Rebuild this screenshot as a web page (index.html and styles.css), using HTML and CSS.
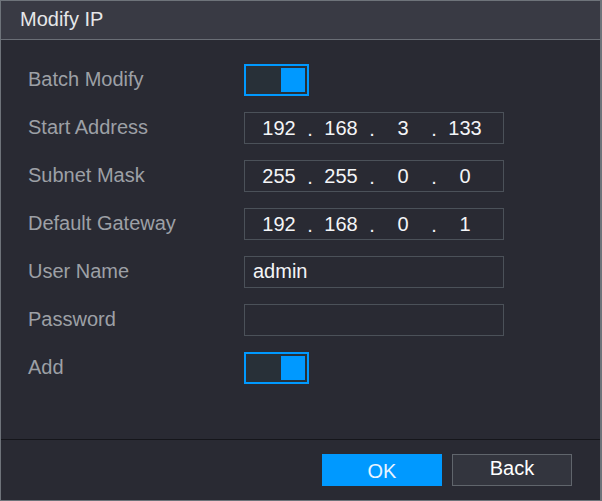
FILE: index.html
```html
<!DOCTYPE html>
<html>
<head>
<meta charset="utf-8">
<link rel="stylesheet" href="styles.css">
</head>
<body>
<div class="dialog">
  <div class="titlebar">Modify IP</div>
  <div class="content">
    <div class="row">
      <div class="label">Batch Modify</div>
      <div class="toggle"><span class="knob"></span></div>
    </div>
    <div class="row">
      <div class="label">Start Address</div>
      <div class="field ip">
        <span class="oct">192</span><span class="dot">.</span><span class="oct">168</span><span class="dot">.</span><span class="oct">3</span><span class="dot">.</span><span class="oct">133</span>
      </div>
    </div>
    <div class="row">
      <div class="label">Subnet Mask</div>
      <div class="field ip">
        <span class="oct">255</span><span class="dot">.</span><span class="oct">255</span><span class="dot">.</span><span class="oct">0</span><span class="dot">.</span><span class="oct">0</span>
      </div>
    </div>
    <div class="row">
      <div class="label">Default Gateway</div>
      <div class="field ip">
        <span class="oct">192</span><span class="dot">.</span><span class="oct">168</span><span class="dot">.</span><span class="oct">0</span><span class="dot">.</span><span class="oct">1</span>
      </div>
    </div>
    <div class="row">
      <div class="label">User Name</div>
      <div class="field text">admin</div>
    </div>
    <div class="row">
      <div class="label">Password</div>
      <div class="field text"></div>
    </div>
    <div class="row">
      <div class="label">Add</div>
      <div class="toggle"><span class="knob"></span></div>
    </div>
  </div>
  <div class="footer">
    <button class="btn btn-ok">OK</button>
    <button class="btn btn-back">Back</button>
  </div>
</div>
</body>
</html>
```

FILE: styles.css
```css
html, body {
  margin: 0;
  padding: 0;
  background: #292a33;
}
body {
  font-family: "Liberation Sans", Arial, sans-serif;
}
.dialog {
  width: 602px;
  height: 501px;
  box-sizing: border-box;
  border: 1px solid #6e737a;
  border-right-width: 2px;
  background: #292a33;
  display: flex;
  flex-direction: column;
}
.titlebar {
  height: 38px;
  border-bottom: 1px solid #6a6e76;
  background: #393a44;
  color: #e6e7e9;
  font-size: 20px;
  line-height: 36px;
  padding-left: 19px;
}
.content {
  height: 399px;
  box-sizing: border-box;
  padding: 24px 0 0 27px;
  display: flex;
  flex-direction: column;
  gap: 16px;
}
.row {
  display: flex;
  align-items: center;
  height: 32px;
}
.label {
  width: 216px;
  color: #9da0a6;
  font-size: 20px;
  padding-bottom: 2px;
}
.toggle {
  width: 65px;
  height: 32px;
  box-sizing: border-box;
  border: 2px solid #0099ff;
  background: #283038;
  padding: 2px;
  display: flex;
  justify-content: flex-end;
}
.knob {
  width: 24px;
  height: 24px;
  background: #0099ff;
}
.field {
  width: 260px;
  height: 32px;
  box-sizing: border-box;
  border: 1px solid #4b5159;
  color: #f4f5f7;
  font-size: 20px;
  display: flex;
  align-items: center;
}
.field.text {
  padding-left: 8px;
  padding-bottom: 1px;
}
.ip {
  padding-left: 12px;
}
.oct {
  width: 44px;
  text-align: center;
}
.dot {
  width: 18px;
  text-align: center;
  position: relative;
  top: 1px;
}
.footer {
  flex: 1;
  border-top: 1px solid #15161b;
  display: flex;
  justify-content: flex-end;
  align-items: flex-start;
  padding: 14px 28px 0 0;
  gap: 10px;
}
.btn {
  width: 120px;
  height: 32px;
  box-sizing: border-box;
  font-family: "Liberation Sans", Arial, sans-serif;
  font-size: 20px;
  margin: 0;
  padding: 0;
  cursor: pointer;
}
.btn-ok {
  background: #0099ff;
  border: none;
  color: #e8f4ff;
  padding-top: 2px;
}
.btn-back {
  background: #33353e;
  border: 1px solid #60656c;
  color: #ffffff;
  padding-bottom: 3px;
}
```
